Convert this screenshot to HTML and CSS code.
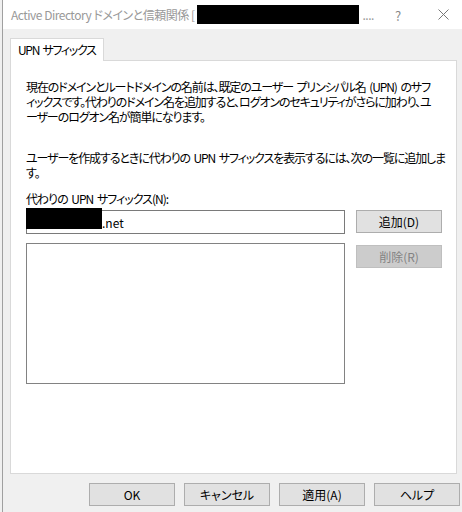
FILE: index.html
```html
<!DOCTYPE html>
<html lang="ja">
<head>
  <meta charset="UTF-8" />
  <title>Active Directory ドメインと信頼関係</title>
  <link rel="stylesheet" href="styles.css">
</head>
<body>
  <div class="window">
    <div class="titlebar">
      <span class="title">Active Directory ドメインと信頼関係 [</span>
      <span class="redact title-redact"></span>
      <span class="title">....</span>
      <span class="help">?</span>
      <svg class="close" width="11" height="11" viewBox="0 0 11 11">
        <path d="M0.5 0.5 L10.5 10.5 M10.5 0.5 L0.5 10.5" stroke="#777" stroke-width="1" fill="none"/>
      </svg>
    </div>
    <div class="dialog">
      <div class="tabs">
        <div class="tab">UPN サフィックス</div>
      </div>
      <div class="panel">
        <p class="desc">現在のドメインとルートドメインの名前は、既定のユーザー プリンシパル名 (UPN) のサフ<br>ィックスです。代わりのドメイン名を追加すると、ログオンのセキュリティがさらに加わり、ユ<br>ーザーのログオン名が簡単になります。</p>
        <p class="desc second">ユーザーを作成するときに代わりの UPN サフィックスを表示するには、次の一覧に追加しま<br>す。</p>
        <div class="label">代わりの UPN サフィックス(N):</div>
        <div class="edit-grid">
          <div class="input">
            <span class="redact input-redact"></span>
            <span class="input-text">.net</span>
          </div>
          <button class="btn">追加(D)</button>
          <div class="list"></div>
          <button class="btn disabled">削除(R)</button>
        </div>
      </div>
      <div class="footer">
        <button class="btn">OK</button>
        <button class="btn">キャンセル</button>
        <button class="btn">適用(A)</button>
        <button class="btn">ヘルプ</button>
      </div>
    </div>
  </div>
</body>
</html>
```

FILE: styles.css
```css
* { margin: 0; padding: 0; box-sizing: border-box; }
body { font-family: "Noto Sans CJK JP", sans-serif; font-size: 12px; color: #000; background: #f0f0f0; font-feature-settings: "palt"; }
.window { width: 460px; height: 512px; margin-left: 2px; border-left: 1px solid #a0a0a0; display: flex; flex-direction: column; background: #f0f0f0; }
.titlebar { height: 29px; background: #fff; display: flex; align-items: center; padding-left: 8px; color: #999; position: relative; }
.title { white-space: nowrap; font-size: 12px; letter-spacing: -0.5px; }
.redact { display: inline-block; background: #000; }
.title-redact { width: 162px; height: 19px; margin: 0 3px 0 3px; }
.help { position: absolute; left: 392px; top: 6px; font-size: 13px; color: #888; }
.close { position: absolute; left: 435px; top: 9px; }
.dialog { flex: 1; padding: 9px 2px 0 7px; display: flex; flex-direction: column; }
.tabs { display: flex; height: 22px; }
.tab { width: 94px; height: 23px; background: #fff; border: 1px solid #d9d9d9; border-bottom: none; padding-left: 7px; line-height: 22px; position: relative; z-index: 1; white-space: nowrap; letter-spacing: -1.3px; word-spacing: 2px; }
.panel { width: 447px; height: 414px; background: #fff; border: 1px solid #d9d9d9; padding: 18px 0 0 15px; }
.desc { line-height: 15px; white-space: nowrap; letter-spacing: -1.1px; word-spacing: 2px; }
.desc.second { margin-top: 26px; }
.label { margin-top: 11px; line-height: 15px; letter-spacing: -1px; word-spacing: 2px; }
.edit-grid { display: grid; grid-template-columns: 319px 86px; column-gap: 11px; grid-template-rows: 24px 141px; row-gap: 9px; margin-top: 4px; }
.input { border: 1px solid #7a7a7a; background: #fff; position: relative; display: flex; align-items: center; }
.input-redact { position: absolute; left: -1px; top: -3px; width: 76px; height: 21px; }
.input-text { padding-left: 75px; }
.list { border: 1px solid #828282; background: #fff; }
.btn { height: 23px; width: 86px; background: #e1e1e1; border: 1px solid #adadad; font-family: inherit; font-size: 12px; color: #000; font-feature-settings: "palt"; }
.edit-grid .disabled { margin-top: 2px; background: #cccccc; border-color: #bfbfbf; color: #838383; }
.footer { display: flex; justify-content: flex-end; gap: 9px; padding: 9px 0 0 0; margin-right: 0; }
```
